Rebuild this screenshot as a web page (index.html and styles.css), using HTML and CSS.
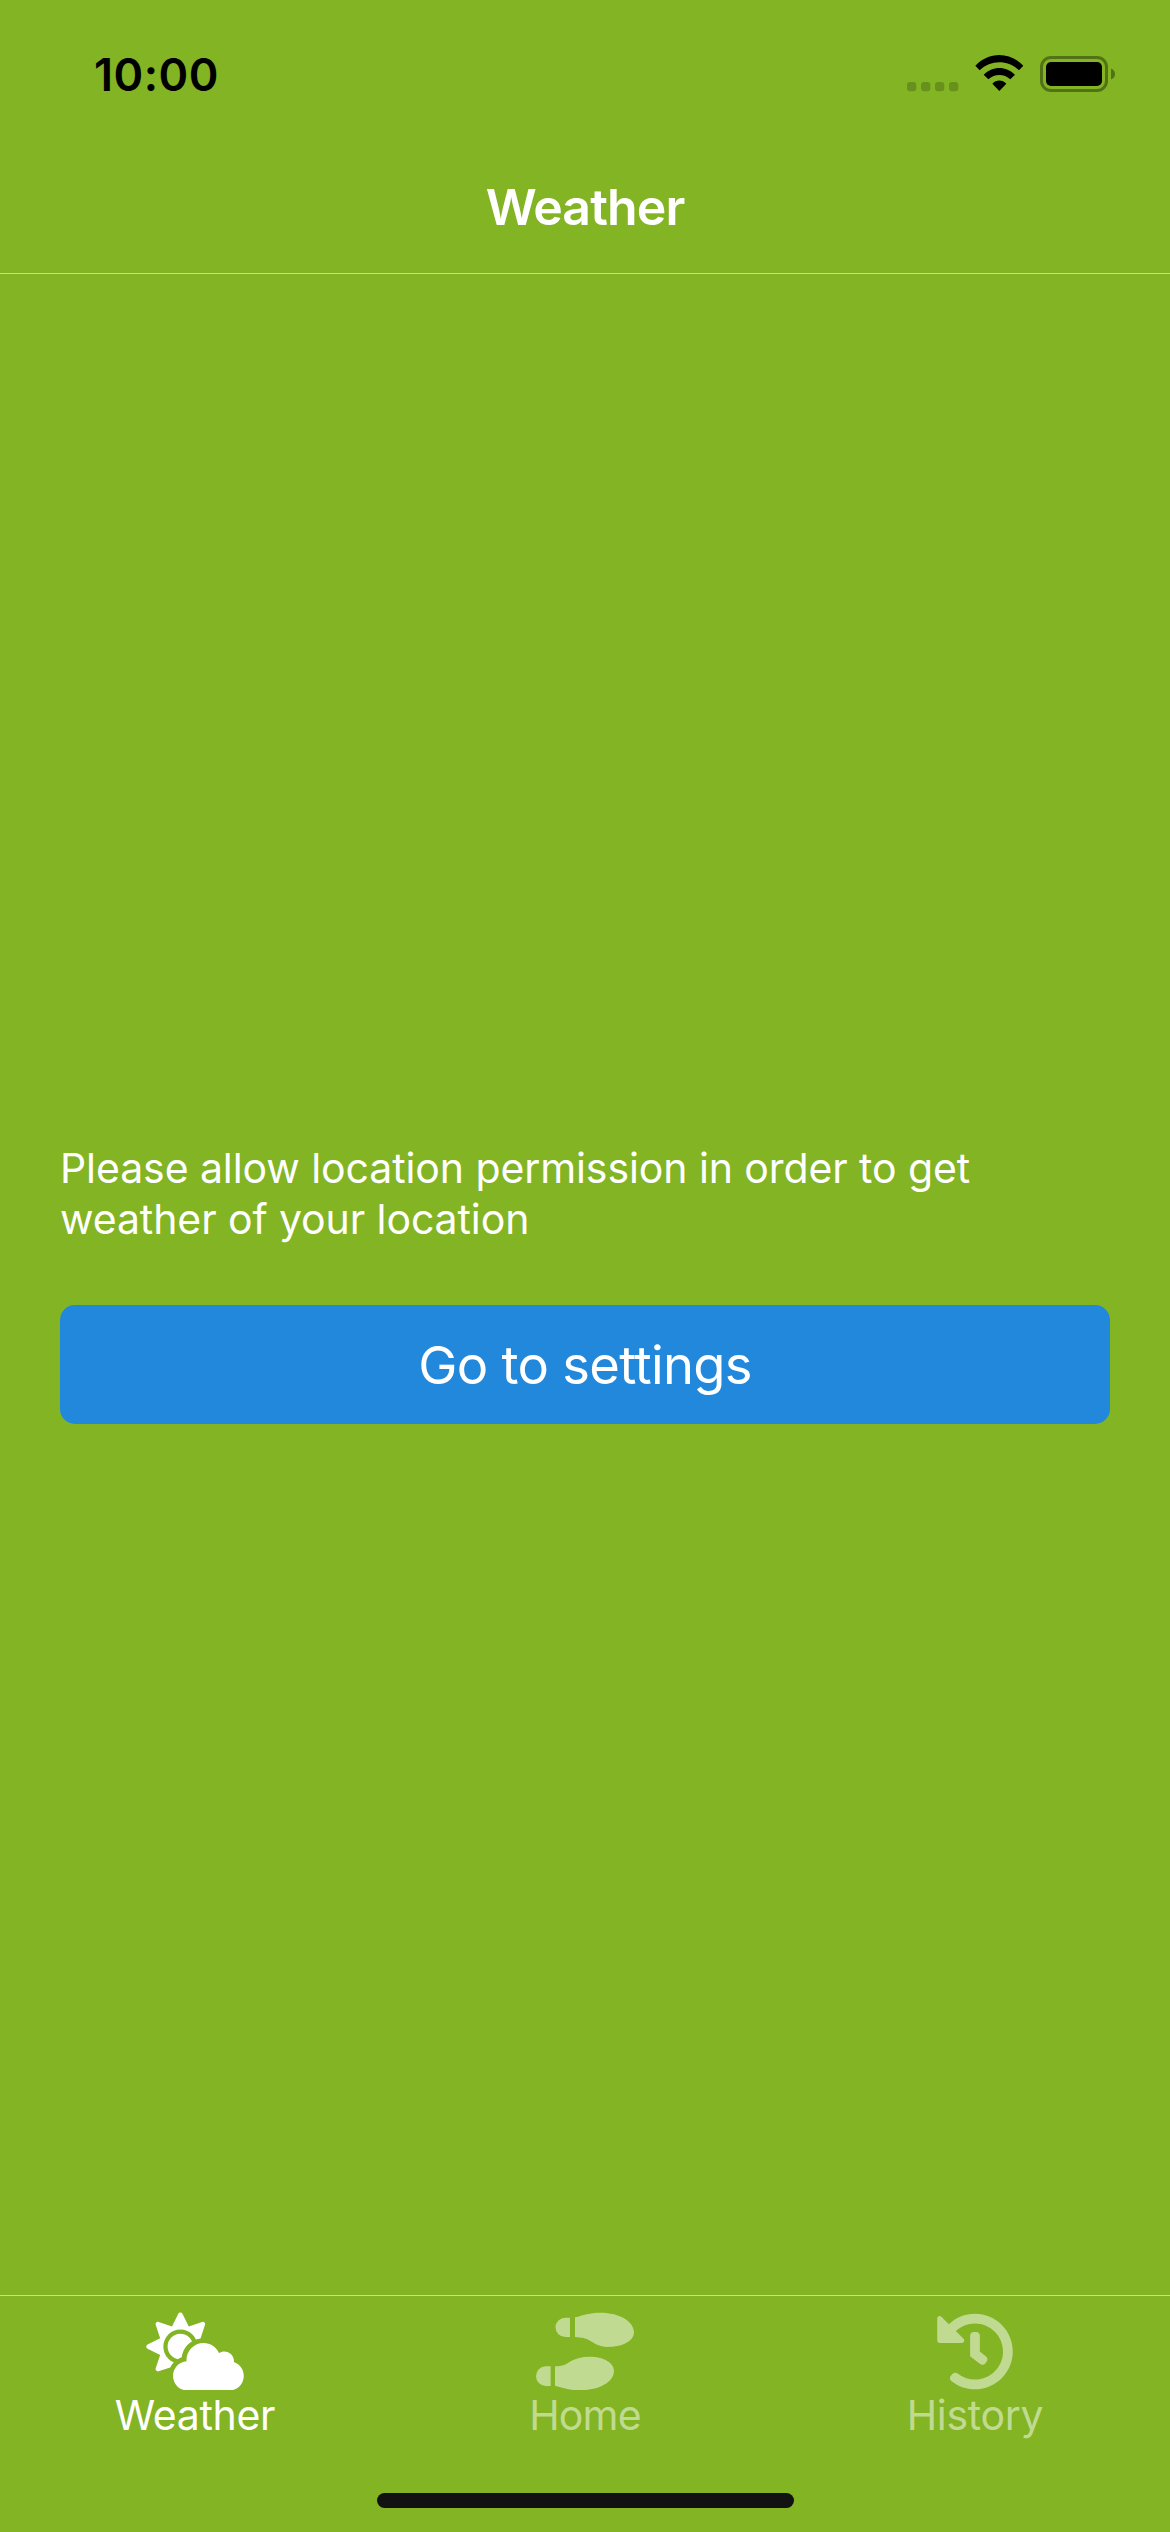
FILE: index.html
```html
<!DOCTYPE html>
<html lang="en">
<head>
<meta charset="utf-8">
<title>Weather</title>
<link rel="stylesheet" href="styles.css">
</head>
<body>
<div class="screen">
  <div class="status">
    <span class="time">10:00</span>
    <div class="indicators">
      <svg class="cell" width="52" height="10" viewBox="0 0 52 10"><rect width="9.3" height="9.3" rx="3"/><rect x="14" width="9.3" height="9.3" rx="3"/><rect x="28" width="9.3" height="9.3" rx="3"/><rect x="42" width="9.3" height="9.3" rx="3"/></svg>
      <svg class="wifi" width="49" height="38" viewBox="254 42 147 114"><path d="M255 77C295 34 359 34 399 77L386 91C354 59 300 59 268 91ZM280 104C306 77 348 77 374 104L360 118C341 101 313 101 294 118ZM306 131C318 118 336 118 348 131L327 153Z"/></svg>
      <svg class="battery" width="76" height="37" viewBox="0 0 76 37"><rect class="shell" x="1.5" y="1.5" width="65" height="33" rx="9.5"/><rect x="6" y="6" width="56" height="24" rx="5"/><path class="nub" d="M71 12.500q4 1.500 4 5.500t-4 5.500z"/></svg>
    </div>
  </div>
  <header class="header"><h1 class="title">Weather</h1></header>
  <main class="content">
    <p class="message">Please allow location permission in order to get weather of your location</p>
    <button class="button" type="button"><span class="button-label">Go to settings</span></button>
  </main>
  <nav class="tabs">
    <a class="tab active">
      <svg class="icon" width="98" height="78" viewBox="0 -3.300 640 512"><path d="M575.2 325.7c.2-1.900.8-3.700.8-5.600 0-35.300-28.700-64-64-64-12.600 0-24.200 3.800-34.100 10-17.600-38.800-56.500-66-101.900-66-61.800 0-112 50.100-112 112 0 3 .7 5.800.9 8.700-49.600 3.700-88.900 44.700-88.900 95.300 0 53 43 96 96 96h272c53 0 96-43 96-96 0-42.100-27.200-77.400-64.800-90.400zm-430.400-22.600c-43.700-43.700-43.700-114.700 0-158.300 43.700-43.700 114.700-43.700 158.400 0 9.700 9.700 16.900 20.900 22.300 32.700 9.800-3.700 20.100-6 30.700-7.500L386 81.100c4-11.900-7.300-23.100-19.200-19.200L279 91.200 237.500 8.400C232-2.800 216-2.800 210.400 8.400L169 91.200 81.100 61.900C69.300 58 58 69.300 61.900 81.100l29.300 87.800-82.800 41.500c-11.200 5.600-11.200 21.500 0 27.100l82.800 41.400-29.300 87.800c-4 11.900 7.300 23.100 19.200 19.200l76.100-25.300c6.100-12.400 14-23.700 23.600-33.500-13.100-5.400-25.400-13.400-36-24zm-4.800-79.200c0 40.800 29.300 74.800 67.900 82.300 8-4.700 16.300-8.800 25.200-11.700 5.400-44.300 31-82.500 67.400-105C287.300 160.400 258 140 224 140c-46.300 0-84 37.600-84 83.900z"/></svg>
      <span class="label label-weather">Weather</span>
    </a>
    <a class="tab">
      <svg class="icon" width="98" height="78" viewBox="108 96 294 234"><path d="M225 112C250 106 268 98 302 98C360 98 402 125 402 157C402 185 365 201 323 201C297 201 283 190 268 181C258 175 245 172 225 171ZM210 113H196a29.500 29 0 0 0 0 58H210ZM165 259C195 258 200 250 215 242C228 235 245 230 268 230C310 230 342 247 342 273C342 305 300 331 237 331C215 331 195 325 165 317ZM152 259H137a29 29.500 0 0 0 0 59H152Z"/></svg>
      <span class="label label-home">Home</span>
    </a>
    <a class="tab">
      <svg class="icon" width="78" height="78" viewBox="0 -3.300 512 512"><path d="M504 255.531c.253 136.640-111.180 248.372-247.820 248.468-59.015.042-113.223-20.530-155.822-54.911-11.077-8.940-11.905-25.541-1.839-35.607l11.267-11.267c8.609-8.609 22.353-9.551 31.891-1.984C173.062 425.135 212.781 440 256 440c101.705 0 184-82.311 184-184 0-101.705-82.311-184-184-184-48.814 0-93.149 18.969-126.068 49.932l50.754 50.754c10.080 10.080 2.941 27.314-11.313 27.314H24c-8.837 0-16-7.163-16-16V38.627c0-14.254 17.234-21.393 27.314-11.314l49.372 49.372C129.209 34.136 189.552 8 256 8c136.810 0 247.747 110.780 248 247.531zm-180.912 78.784l9.823-12.630c8.138-10.463 6.253-25.542-4.210-33.679L288 256.349V152c0-13.255-10.745-24-24-24h-16c-13.255 0-24 10.745-24 24v135.651l65.409 50.874c10.463 8.137 25.541 6.253 33.679-4.210z"/></svg>
      <span class="label label-history">History</span>
    </a>
  </nav>
  <div class="home-bar"><span class="home-indicator"></span></div>
</div>
</body>
</html>
```
FILE: styles.css
```css
* { box-sizing: border-box; }
body { margin: 0; }
.screen {
  width: 1170px;
  height: 2532px;
  display: flex;
  flex-direction: column;
  background: #82b423;
  color: #fff;
  font-family: Inter, "Liberation Sans", sans-serif;
}
.status {
  height: 141px;
  display: flex;
  justify-content: space-between;
  align-items: flex-start;
  padding: 48px 54px 0 94px;
  color: #000;
}
.time { font-size: 45px; font-weight: 600; line-height: 54px; letter-spacing: 0.500px; }
.indicators { display: flex; align-items: flex-start; }
.cell { margin: 34px 16px 0 0; fill: #68901c; }
.wifi { margin: 6px 16px 0 0; }
.battery { margin-top: 8px; }
.shell { fill: none; stroke: #527216; stroke-width: 3; }
.nub { fill: #527216; }
.header {
  height: 133px;
  display: flex;
  justify-content: center;
  align-items: center;
  border-bottom: 1px solid #cdd9a8;
}
.title { margin: 0; font-size: 50px; font-weight: 600; line-height: 60px; letter-spacing: -0.900px; }
.content {
  flex: 1;
  display: flex;
  flex-direction: column;
  justify-content: center;
  gap: 60px;
  padding: 0 60px 2px;
}
.message { margin: 0; font-size: 41px; line-height: 51px; letter-spacing: -0.090px; }
.button {
  height: 119px;
  padding: 0;
  border: 0;
  border-radius: 15px;
  background: #2288dc;
  color: #fff;
  font-family: inherit;
  font-size: 52.500px;
  line-height: 64px;
  letter-spacing: -0.700px;
}
.tabs {
  height: 147px;
  display: grid;
  grid-template-columns: repeat(3, 1fr);
  border-top: 1px solid #cdd9a8;
}
.tab {
  display: flex;
  flex-direction: column;
  align-items: center;
  padding-top: 16px;
  color: #c1da91;
}
.tab.active { color: #fff; }
.icon { fill: currentColor; }
.label { font-size: 41px; line-height: 50px; letter-spacing: -0.300px; }
.label-home { letter-spacing: -0.800px; }
.home-bar { height: 90px; display: flex; justify-content: center; padding-top: 51px; }
.home-indicator { width: 417px; height: 15px; border-radius: 8px; background: #121212; }
```
